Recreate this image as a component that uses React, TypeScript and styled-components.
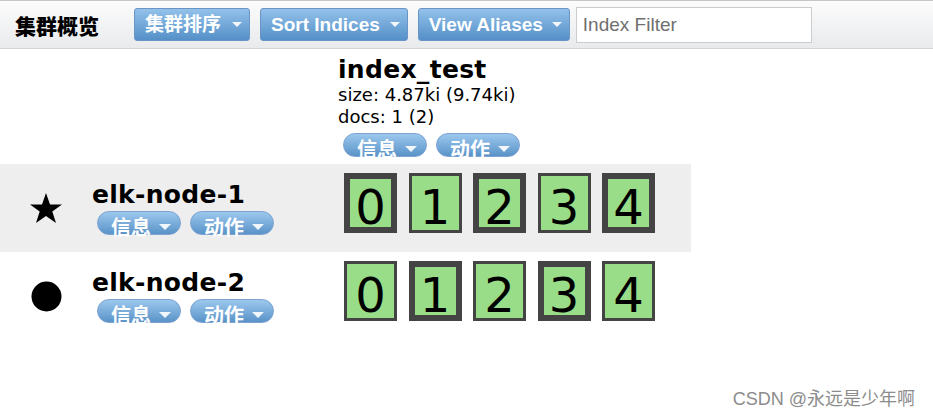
import React from 'react'
import styled, { createGlobalStyle, css } from 'styled-components'

const GlobalStyle = createGlobalStyle`
  html, body {
    margin: 0;
    padding: 0;
    background: #fff;
  }
  body {
    font-family: "DejaVu Sans", Verdana, sans-serif;
    color: #000;
  }
`

const Page = styled.div`
  position: relative;
  width: 933px;
  height: 418px;
  overflow: hidden;
`

const Toolbar = styled.div`
  display: flex;
  align-items: center;
  height: 47px;
  padding-left: 15px;
  border-top: 1px solid #c4c7c8;
  border-bottom: 1px solid #d3d6d8;
  background: linear-gradient(#fcfcfc, #e8eaec);
`

const Title = styled.h1`
  margin: 0 35px 0 0;
  font-family: "Noto Sans CJK SC", sans-serif;
  font-size: 21px;
  font-weight: 900;
  line-height: 24px;
`

const ToolButton = styled.button`
  display: inline-flex;
  align-items: center;
  height: 33px;
  margin-right: 10px;
  padding: 0 7px 0 10px;
  border: 1px solid #6b94c6;
  border-radius: 3px;
  background: linear-gradient(#93c1ea, #5490c8);
  color: #fff;
  font-family: "Liberation Sans", "Noto Sans CJK SC", sans-serif;
  font-size: 19px;
  font-weight: bold;
  line-height: 20px;
`

const Caret = styled.span<{ $gap: number; $size: number }>`
  display: inline-block;
  width: 0;
  height: 0;
  margin-left: ${(p) => p.$gap}px;
  border-left: ${(p) => p.$size}px solid transparent;
  border-right: ${(p) => p.$size}px solid transparent;
  border-top: ${(p) => p.$size}px solid rgba(255, 255, 255, 0.9);
`

const FilterInput = styled.input`
  box-sizing: border-box;
  width: 236px;
  height: 36px;
  margin-left: -4px;
  padding: 0 6px;
  border: 1px solid #cccccc;
  background: #fff;
  font-family: "Liberation Sans", sans-serif;
  font-size: 19px;
  &::placeholder {
    color: #6f6f6f;
  }
`

const Table = styled.div`
  display: grid;
  grid-template-columns: 330px 361px;
`

const IndexHeader = styled.div`
  grid-column: 2;
  padding: 7px 0 7px 8px;
`

const BoldName = styled.div`
  font-size: 25px;
  font-weight: bold;
  line-height: 28px;
  letter-spacing: 0.3px;
`

const IndexStat = styled.div`
  font-size: 18px;
  line-height: 22px;
`

const PillRow = styled.div<{ $top: number; $left: number }>`
  display: flex;
  gap: 9px;
  margin-top: ${(p) => p.$top}px;
  margin-left: ${(p) => p.$left}px;
`

const Pill = styled.span`
  display: inline-flex;
  align-items: center;
  box-sizing: border-box;
  height: 24px;
  width: 84px;
  padding: 8px 0 0 13px;
  border: 1px solid #7ea2d2;
  border-radius: 12px;
  background: linear-gradient(#9cc8ee, #5a93c8);
  color: #fff;
  font-family: "Noto Sans CJK SC", sans-serif;
  font-size: 20px;
  font-weight: bold;
  line-height: 20px;
  white-space: nowrap;
`

const Row = styled.div<{ $shaded: boolean }>`
  display: contents;
  & > div {
    height: 88px;
    background: ${(p) => (p.$shaded ? '#eeeeee' : '#ffffff')};
  }
`

const NodeCell = styled.div`
  display: flex;
  align-items: center;
`

const IconBox = styled.div`
  display: flex;
  justify-content: center;
  width: 92px;
  flex-shrink: 0;
`

const ShardCell = styled.div`
  display: flex;
  align-items: flex-start;
  gap: 11.5px;
  box-sizing: border-box;
  padding: 9px 0 0 14px;
`

const Shard = styled.div<{ $primary: boolean }>`
  box-sizing: border-box;
  width: 53px;
  height: 60px;
  background: #99dd88;
  text-align: center;
  font-size: 48px;
  line-height: 38px;
  ${(p) =>
    p.$primary
      ? css`
          border: 6px solid #444;
          padding-top: 9px;
        `
      : css`
          border: 3px solid #444;
          padding-top: 12px;
        `}
`

const Watermark = styled.div`
  position: absolute;
  right: 18px;
  bottom: 8px;
  color: #8c8c8c;
  font-family: "Liberation Sans", "Noto Sans CJK SC", sans-serif;
  font-size: 18px;
  text-shadow: 0 0 1px #fff;
`

const Star = () => (
  <svg width="34" height="32" viewBox="0 0 34 32">
    <polygon
      points="17,1 21,12.5 33,12.5 23.3,19.6 27,31 17,24 7,31 10.7,19.6 1,12.5 13,12.5"
      fill="#000"
    />
  </svg>
)

const Dot = () => (
  <svg width="31" height="31" viewBox="0 0 31 31">
    <circle cx="15.5" cy="15.5" r="15" fill="#000" />
  </svg>
)

const Actions = ({ top, left }: { top: number; left: number }) => (
  <PillRow $top={top} $left={left}>
    <Pill>
      信息
      <Caret $gap={8} $size={6} />
    </Pill>
    <Pill>
      动作
      <Caret $gap={8} $size={6} />
    </Pill>
  </PillRow>
)

const nodes = [
  { name: 'elk-node-1', master: true, primaries: [0, 2, 4] },
  { name: 'elk-node-2', master: false, primaries: [1, 3] },
]

export default function App() {
  return (
    <Page>
      <GlobalStyle />
      <Toolbar>
        <Title>集群概览</Title>
        <ToolButton>
          集群排序
          <Caret $gap={11} $size={5} />
        </ToolButton>
        <ToolButton>
          Sort Indices
          <Caret $gap={10} $size={5} />
        </ToolButton>
        <ToolButton>
          View Aliases
          <Caret $gap={9} $size={5} />
        </ToolButton>
        <FilterInput placeholder="Index Filter" />
      </Toolbar>
      <Table>
        <IndexHeader>
          <BoldName>index_test</BoldName>
          <IndexStat>size: 4.87ki (9.74ki)</IndexStat>
          <IndexStat>docs: 1 (2)</IndexStat>
          <Actions top={5} left={5} />
        </IndexHeader>
        {nodes.map((node, i) => (
          <Row key={node.name} $shaded={i === 0}>
            <NodeCell>
              <IconBox>{node.master ? <Star /> : <Dot />}</IconBox>
              <div>
                <BoldName>{node.name}</BoldName>
                <Actions top={2} left={5} />
              </div>
            </NodeCell>
            <ShardCell>
              {[0, 1, 2, 3, 4].map((n) => (
                <Shard key={n} $primary={node.primaries.includes(n)}>
                  {n}
                </Shard>
              ))}
            </ShardCell>
          </Row>
        ))}
      </Table>
      <Watermark>CSDN @永远是少年啊</Watermark>
    </Page>
  )
}
